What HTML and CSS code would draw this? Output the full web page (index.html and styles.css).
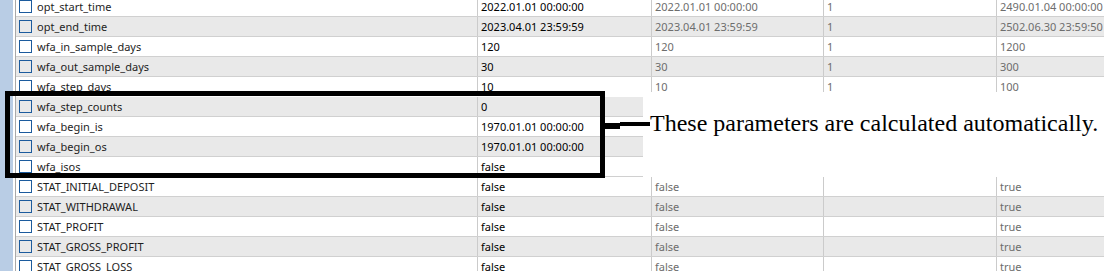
FILE: index.html
```html
<!DOCTYPE html>
<html lang="en">
<head>
  <meta charset="UTF-8" />
  <title>Tester - Inputs</title>
  <link rel="stylesheet" href="styles.css">
</head>
<body>

  <div class="tester">
    <div class="strip"></div>

    <div class="inputs">
      <!-- optimisation range, cut off at the bottom -->
      <div class="block block-top">
        <div class="row">
          <div class="cell name"><span class="check"></span>opt_start_time</div>
          <div class="cell value">2022.01.01 00:00:00</div>
          <div class="cell dim">2022.01.01 00:00:00</div>
          <div class="cell dim">1</div>
          <div class="cell dim">2490.01.04 00:00:00</div>
        </div>
        <div class="row">
          <div class="cell name"><span class="check"></span>opt_end_time</div>
          <div class="cell value">2023.04.01 23:59:59</div>
          <div class="cell dim">2023.04.01 23:59:59</div>
          <div class="cell dim">1</div>
          <div class="cell dim">2502.06.30 23:59:50</div>
        </div>
        <div class="row">
          <div class="cell name"><span class="check"></span>wfa_in_sample_days</div>
          <div class="cell value">120</div>
          <div class="cell dim">120</div>
          <div class="cell dim">1</div>
          <div class="cell dim">1200</div>
        </div>
        <div class="row">
          <div class="cell name"><span class="check"></span>wfa_out_sample_days</div>
          <div class="cell value">30</div>
          <div class="cell dim">30</div>
          <div class="cell dim">1</div>
          <div class="cell dim">300</div>
        </div>
        <div class="row">
          <div class="cell name"><span class="check"></span>wfa_step_days</div>
          <div class="cell value">10</div>
          <div class="cell dim">10</div>
          <div class="cell dim">1</div>
          <div class="cell dim">100</div>
        </div>
      </div>

      <!-- calculated parameters -->
      <div class="block block-mid">
        <div class="row short">
          <div class="cell name"><span class="check"></span>wfa_step_counts</div>
          <div class="cell value">0</div>
        </div>
        <div class="row short">
          <div class="cell name"><span class="check"></span>wfa_begin_is</div>
          <div class="cell value">1970.01.01 00:00:00</div>
        </div>
        <div class="row short">
          <div class="cell name"><span class="check"></span>wfa_begin_os</div>
          <div class="cell value">1970.01.01 00:00:00</div>
        </div>
        <div class="row short">
          <div class="cell name"><span class="check"></span>wfa_isos</div>
          <div class="cell value">false</div>
        </div>
      </div>

      <div class="block">
        <div class="row">
          <div class="cell name"><span class="check"></span>STAT_INITIAL_DEPOSIT</div>
          <div class="cell value">false</div>
          <div class="cell dim">false</div>
          <div class="cell dim"></div>
          <div class="cell dim">true</div>
        </div>
        <div class="row">
          <div class="cell name"><span class="check"></span>STAT_WITHDRAWAL</div>
          <div class="cell value">false</div>
          <div class="cell dim">false</div>
          <div class="cell dim"></div>
          <div class="cell dim">true</div>
        </div>
        <div class="row">
          <div class="cell name"><span class="check"></span>STAT_PROFIT</div>
          <div class="cell value">false</div>
          <div class="cell dim">false</div>
          <div class="cell dim"></div>
          <div class="cell dim">true</div>
        </div>
        <div class="row">
          <div class="cell name"><span class="check"></span>STAT_GROSS_PROFIT</div>
          <div class="cell value">false</div>
          <div class="cell dim">false</div>
          <div class="cell dim"></div>
          <div class="cell dim">true</div>
        </div>
        <div class="row">
          <div class="cell name"><span class="check"></span>STAT_GROSS_LOSS</div>
          <div class="cell value">false</div>
          <div class="cell dim">false</div>
          <div class="cell dim"></div>
          <div class="cell dim">true</div>
        </div>
      </div>
    </div>

    <!-- annotation drawn over the table -->
    <div class="mark-box"></div>
    <svg class="mark-line" width="50" height="12" viewBox="0 0 50 12">
      <polygon points="0,3 17,3 17,2 47,2 47,6 17,6 17,9 0,9" fill="#000"/>
    </svg>
    <div class="mark-text">These parameters are calculated automatically.</div>
  </div>

</body>
</html>
```

FILE: styles.css
```css
body {
  margin: 0;
  background: #fff;
  font-family: "Noto Sans", Arial, sans-serif;
  font-size: 11px;
  overflow: hidden;
}

.tester {
  position: relative;
  display: flex;
  height: 271px;
  overflow: hidden;
}

.strip {
  width: 13px;
  flex-shrink: 0;
  background: #b9cde5;
}

.inputs {
  flex: 1;
  margin-left: 2px;
  border-left: 1px solid #a9a9a9;
}

.block-top {
  height: 92px;
  overflow: hidden;
}

.block-top .row:first-child {
  margin-top: -3px;
}

.block-mid {
  margin-top: 5px;
}

.row {
  display: grid;
  grid-template-columns: 462px 174px 172px 173px 1fr;
  height: 20px;
  box-sizing: border-box;
  border-bottom: 1px solid #d0d0d0;
  background: #fff;
}

.row.short {
  grid-template-columns: 462px 165px;
  width: 627px;
}

.row:nth-child(even) {
  background: #e9e9e9;
}

.block-mid .row:nth-child(odd) {
  background: #e9e9e9;
}

.block-mid .row:nth-child(even) {
  background: #fff;
}

.cell {
  display: flex;
  align-items: center;
  padding: 0 3px;
  border-right: 1px solid #cbcbcb;
  line-height: 19px;
  white-space: nowrap;
  overflow: hidden;
  box-sizing: border-box;
}

.cell:last-child {
  border-right: none;
}

.name {
  color: #1e1e1e;
}

.value {
  color: #000;
}

.dim {
  color: #6d6d6d;
}

.check {
  width: 13px;
  height: 13px;
  box-sizing: border-box;
  border: 1px solid #1c5b9d;
  margin-right: 5px;
  flex-shrink: 0;
}

.mark-box {
  position: absolute;
  left: 5px;
  top: 91px;
  width: 600px;
  height: 87px;
  box-sizing: border-box;
  border: 5px solid #000;
}

.mark-line {
  position: absolute;
  left: 603px;
  top: 120px;
}

.mark-text {
  position: absolute;
  left: 650px;
  top: 109px;
  font-family: "Liberation Serif", "Times New Roman", serif;
  font-size: 24px;
  line-height: 28px;
  color: #000;
  white-space: nowrap;
}
```
